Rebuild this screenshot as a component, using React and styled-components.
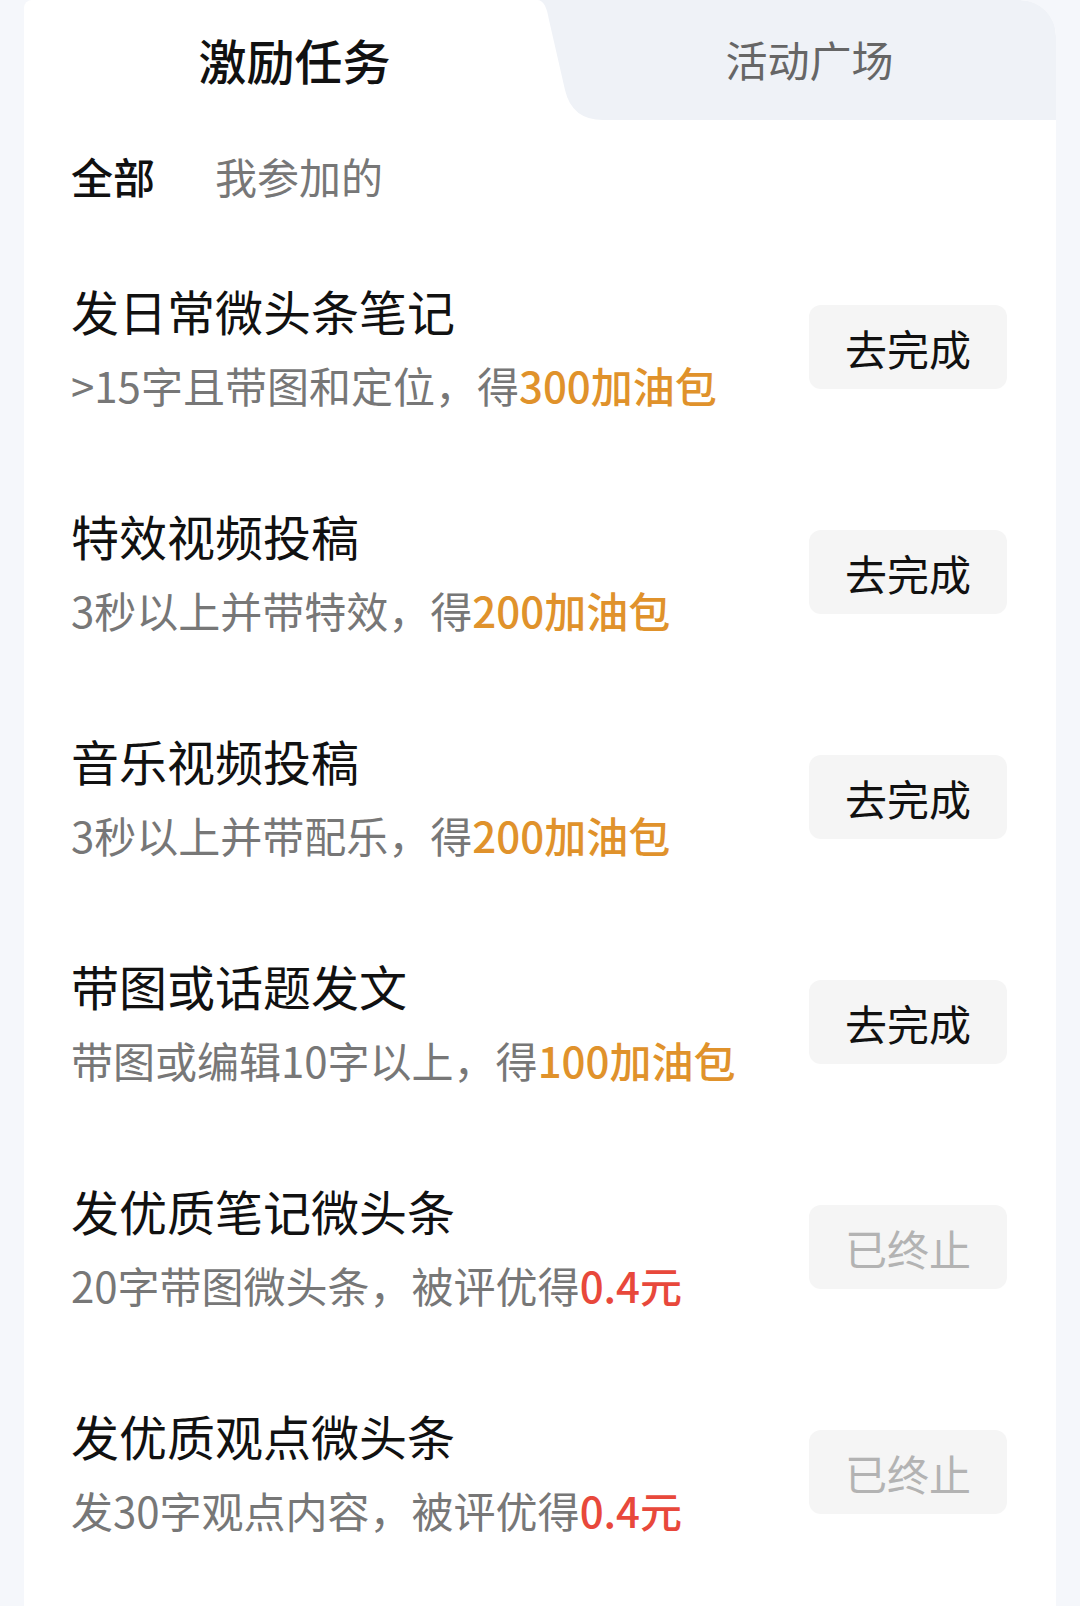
import React from 'react';
import styled, { createGlobalStyle } from 'styled-components';

const GlobalStyle = createGlobalStyle`
    body {
        margin: 0;
        background: #f5f7fb;
        font-family: 'Noto Sans CJK SC', 'Noto Sans', sans-serif;
    }
`;

const Card = styled.div`
    margin: 0 24px;
    min-height: 1606px;
    background: #fff;
    border-radius: 8px 36px 0 0;
    overflow: hidden;
`;

const TabBar = styled.div`
    display: flex;
    height: 120px;
`;

const ActiveTab = styled.div`
    flex: 0 0 513px;
    box-sizing: border-box;
    padding: 0 0 3px 28px;
    display: flex;
    align-items: center;
    justify-content: center;
    font-size: 48px;
    font-weight: 500;
    color: #111;
`;

const InactiveTab = styled.div`
    flex: 1;
    box-sizing: border-box;
    padding: 0 0 3px 26px;
    display: flex;
    align-items: center;
    justify-content: center;
    font-size: 42px;
    color: #666;
    background: #eff2f7;
    clip-path: path('M0,0 C7,0 10,8 12,20 L28,90 Q35,120 66,120 L519,120 L519,36 Q519,0 483,0 Z');
`;

const Filters = styled.div`
    display: flex;
    gap: 60px;
    padding: 25px 48px 0 47px;
    line-height: 62px;
    font-size: 42px;
`;

const Filter = styled.span`
    color: ${p => (p.$active ? '#111' : '#777')};
    font-weight: ${p => (p.$active ? 500 : 400)};
`;

const List = styled.div`
    display: flex;
    flex-direction: column;
    gap: 88px;
    padding: 71px 49px 0 47px;
`;

const Row = styled.div`
    display: flex;
    justify-content: space-between;
    align-items: flex-start;
`;

const Info = styled.div`
    display: flex;
    flex-direction: column;
`;

const Title = styled.div`
    font-size: 48px;
    line-height: 64px;
    color: #111;
`;

const Desc = styled.div`
    margin-top: 13px;
    font-size: 42px;
    line-height: 60px;
    color: #777;
`;

const Reward = styled.span`
    font-weight: 500;
    color: ${p => (p.$red ? '#e8483b' : '#e0922b')};
`;

const ActionButton = styled.div`
    margin-top: 27px;
    width: 198px;
    height: 84px;
    border-radius: 12px;
    background: #f5f5f5;
    display: flex;
    align-items: center;
    justify-content: center;
    font-size: 42px;
    color: ${p => (p.$disabled ? '#b3b3b3' : '#111')};
`;

const tasks = [
    { title: '发日常微头条笔记', desc: '>15字且带图和定位，得', reward: '300加油包' },
    { title: '特效视频投稿', desc: '3秒以上并带特效，得', reward: '200加油包' },
    { title: '音乐视频投稿', desc: '3秒以上并带配乐，得', reward: '200加油包' },
    { title: '带图或话题发文', desc: '带图或编辑10字以上，得', reward: '100加油包' },
    { title: '发优质笔记微头条', desc: '20字带图微头条，被评优得', reward: '0.4元', ended: true },
    { title: '发优质观点微头条', desc: '发30字观点内容，被评优得', reward: '0.4元', ended: true },
];

const App = () => {
    return (
        <>
            <GlobalStyle />
            <Card>
                <TabBar>
                    <ActiveTab>激励任务</ActiveTab>
                    <InactiveTab>活动广场</InactiveTab>
                </TabBar>
                <Filters>
                    <Filter $active>全部</Filter>
                    <Filter>我参加的</Filter>
                </Filters>
                <List>
                    {tasks.map(t => (
                        <Row key={t.title}>
                            <Info>
                                <Title>{t.title}</Title>
                                <Desc>
                                    {t.desc}
                                    <Reward $red={t.ended}>{t.reward}</Reward>
                                </Desc>
                            </Info>
                            <ActionButton $disabled={t.ended}>{t.ended ? '已终止' : '去完成'}</ActionButton>
                        </Row>
                    ))}
                </List>
            </Card>
        </>
    );
};

export default App;
